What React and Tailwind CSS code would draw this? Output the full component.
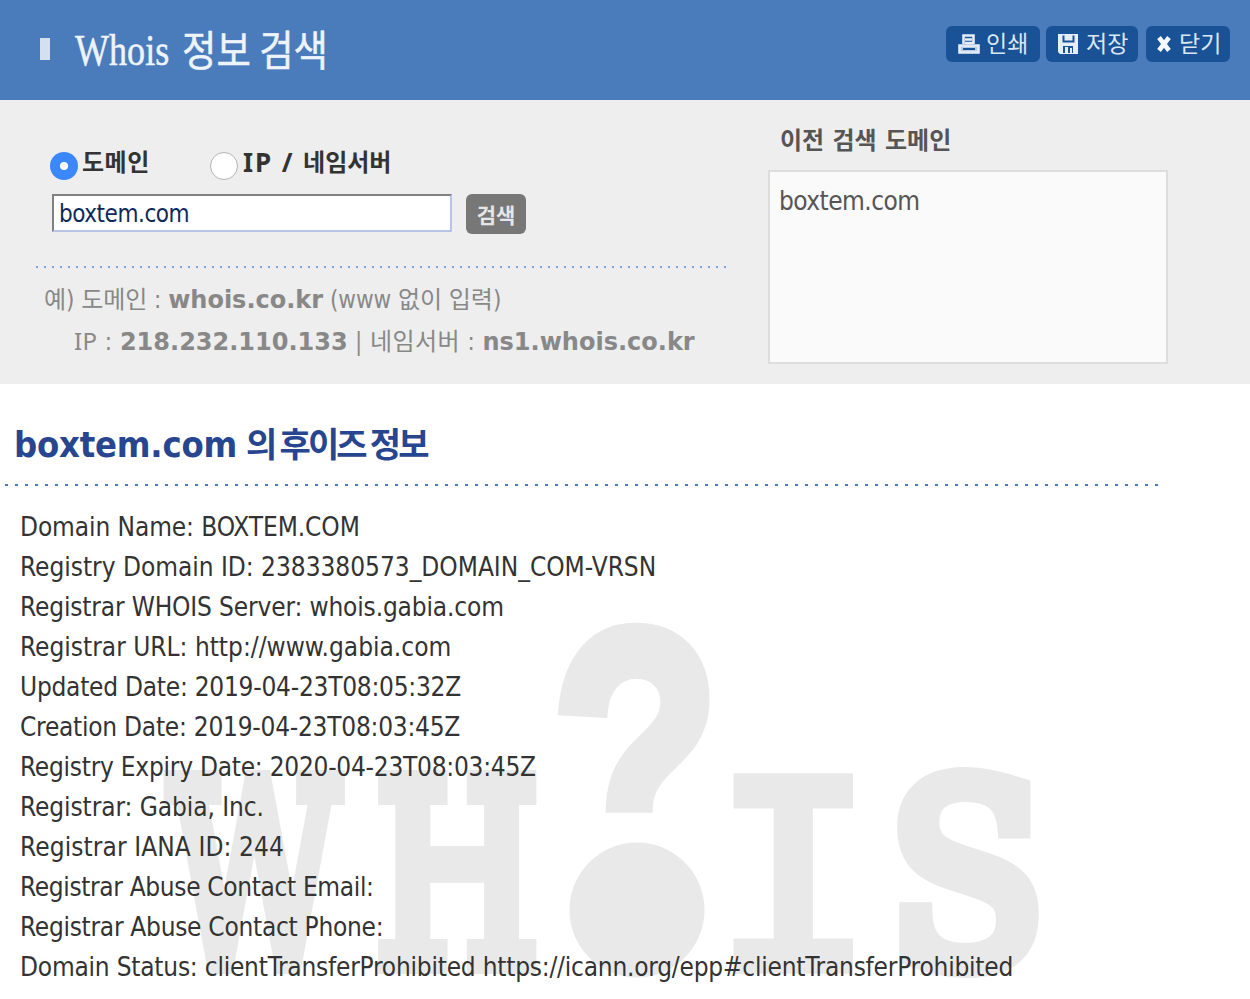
const BODY = "font-['DejaVu_Sans_Condensed','DejaVu_Sans','Noto_Sans_CJK_KR',sans-serif]"
const BOLD = "font-['DejaVu_Sans','Noto_Sans_CJK_KR',sans-serif] font-bold"

const RECORD = [
  { text: 'Domain Name: BOXTEM.COM', tracking: 'tracking-[-0.1px]' },
  { text: 'Registry Domain ID: 2383380573_DOMAIN_COM-VRSN', tracking: 'tracking-[-0.02px]' },
  { text: 'Registrar WHOIS Server: whois.gabia.com', tracking: 'tracking-[-0.15px]' },
  { text: 'Registrar URL: http://www.gabia.com', tracking: 'tracking-[0px]' },
  { text: 'Updated Date: 2019-04-23T08:05:32Z', tracking: 'tracking-[-0.25px]' },
  { text: 'Creation Date: 2019-04-23T08:03:45Z', tracking: 'tracking-[-0.25px]' },
  { text: 'Registry Expiry Date: 2020-04-23T08:03:45Z', tracking: 'tracking-[-0.25px]' },
  { text: 'Registrar: Gabia, Inc.', tracking: 'tracking-[-0.08px]' },
  { text: 'Registrar IANA ID: 244', tracking: 'tracking-[0.1px]' },
  { text: 'Registrar Abuse Contact Email:', tracking: 'tracking-[-0.35px]' },
  { text: 'Registrar Abuse Contact Phone:', tracking: 'tracking-[-0.28px]' },
  {
    text: 'Domain Status: clientTransferProhibited https://icann.org/epp#clientTransferProhibited',
    tracking: 'tracking-[-0.22px]',
  },
]

function PrintIcon() {
  return (
    <svg width="22" height="20" viewBox="0 0 22 20" fill="none" stroke="#e4edf8" strokeWidth="2.6">
      <path d="M5.5 10V1.5h10V10M7 5.5h7M7 9h8" />
      <path d="M1.5 11.5h19v7h-19z" fill="#b9cde6" />
      <path d="M5 15h12" stroke="#1a5297" strokeWidth="2" />
    </svg>
  )
}

function SaveIcon() {
  return (
    <svg width="20" height="20" viewBox="0 0 20 20">
      <path d="M0 0h20v20H2l-2-2z" fill="#e4edf8" />
      <path d="M4.5 1.5h2v5h8v-5h2v7h-12zM5 12h10v7H5z" fill="#1a5297" />
      <path d="M7 13h3v6H7zM12 14h2v5h-2z" fill="#e4edf8" />
    </svg>
  )
}

function CloseIcon() {
  return (
    <svg width="14" height="16" viewBox="0 0 14 16" fill="none" stroke="#f4f8fd" strokeWidth="4.6">
      <path d="M2 1.5l10 13M12 1.5l-10 13" />
    </svg>
  )
}

function HeaderButton({ className, icon, label }) {
  return (
    <button
      className={`flex h-9 items-center rounded-md bg-[#1a5297] font-['Noto_Sans_CJK_KR',sans-serif] text-[23px] text-[#dbe6f4] ${className}`}
    >
      {icon}
      <span className="pb-[3px] leading-[33px]">{label}</span>
    </button>
  )
}

function Header() {
  return (
    <header className="flex h-[100px] justify-between bg-[#4a7bbb] pr-5 pl-10">
      <div className="flex">
        <span className="mt-[38px] h-[22px] w-[10px] bg-[#d3e0f0]" />
        <h1 className="ml-[25px] flex h-[100px] w-64 whitespace-nowrap text-[#eef4fb] [-webkit-text-stroke:0.5px_#eef4fb]">
          <span className="w-[107px] origin-left scale-x-[0.82] font-['Liberation_Serif',serif] text-[44px] leading-[102px]">
            Whois
          </span>
          <span className="origin-left scale-x-[0.89] font-['Noto_Sans_CJK_KR',sans-serif] text-[42px] leading-[96px]">
            정보 검색
          </span>
        </h1>
      </div>
      <div className="mt-[26px] flex">
        <HeaderButton className="w-[94px] gap-[6px] pl-3" icon={<PrintIcon />} label="인쇄" />
        <HeaderButton className="ml-1.5 w-[92px] gap-2 pl-3" icon={<SaveIcon />} label="저장" />
        <HeaderButton className="ml-2 w-[84px] gap-2 pl-[11px]" icon={<CloseIcon />} label="닫기" />
      </div>
    </header>
  )
}

function SearchForm() {
  return (
    <div className="w-[768px] pl-9">
      <div className={`mt-[44px] flex h-10 text-2xl leading-[38px] text-[#333] ${BOLD}`}>
        <label className="flex w-40 pl-[14px]">
          <span className="mt-2 flex size-7 items-center justify-center rounded-full bg-[#3b88fd]">
            <span className="size-2 rounded-full bg-white" />
          </span>
          <span className="ml-1 tracking-[0.5px]">도메인</span>
        </label>
        <label className="flex pl-[14px]">
          <span className="mt-2 size-7 rounded-full border border-[#b4b4b4] bg-white" />
          <span className="ml-[5px] font-['Noto_Sans',sans-serif] text-[26px] leading-[37px] tracking-[1.9px] whitespace-pre">
            IP /{' '}
          </span>
          <span>네임서버</span>
        </label>
      </div>
      <div className="mt-[10px] flex h-10 pl-4">
        <div
          className={`h-[38px] w-[400px] border-2 border-t-[#808080] border-r-[#b8c4e6] border-b-[#b8c4e6] border-l-[#808080] bg-white pl-[5px] text-2xl leading-[36px] tracking-[-0.45px] text-[#0b2a5b] ${BODY}`}
        >
          boxtem.com
        </div>
        <button className="ml-[14px] h-10 w-[60px] rounded-md bg-[#777] font-['Noto_Sans_CJK_KR',sans-serif] text-[21px] leading-[38px] font-bold text-[#e6e6e6]">
          검색
        </button>
      </div>
      <div className="mt-8 h-[2px] w-[692px] bg-[repeating-linear-gradient(90deg,#74a5d8_0_2px,transparent_2px_8px)]" />
      <div className={`mt-[11px] text-2xl leading-[42px] whitespace-nowrap text-[#888] ${BODY}`}>
        <p className="pl-2 tracking-[-0.05px]">
          예) 도메인 : <b className={`tracking-normal ${BOLD}`}>whois.co.kr</b> (www 없이 입력)
        </p>
        <p className="pl-[38px] tracking-[0.45px]">
          <span className="font-['Noto_Sans',sans-serif] leading-none">IP</span> :{' '}
          <b className={`tracking-normal ${BOLD}`}>218.232.110.133</b> | 네임서버 :{' '}
          <b className={`tracking-normal ${BOLD}`}>ns1.whois.co.kr</b>
        </p>
      </div>
    </div>
  )
}

function History() {
  return (
    <div>
      <h2 className={`mt-[23px] pl-3 text-2xl leading-9 text-[#555] ${BOLD}`}>이전 검색 도메인</h2>
      <div
        className={`mt-[11px] h-[194px] w-[400px] border-2 border-[#ddd] bg-[#fafafa] pt-[9px] pl-[9px] text-[26px] leading-10 tracking-[-0.55px] text-[#555] ${BODY}`}
      >
        boxtem.com
      </div>
    </div>
  )
}

function Watermark() {
  return (
    <svg
      className="absolute top-0 left-0"
      width="1044"
      height="615"
      viewBox="0 384 1044 615"
      fill="#e9e9e9"
      stroke="#e9e9e9"
    >
      <clipPath id="hook">
        <path d="M540 600h200v214H540z" />
      </clipPath>
      <g fontFamily="DejaVu Serif" fontSize="250" strokeWidth="22">
        <text transform="translate(170 963) scale(0.655 1)">W</text>
        <text transform="translate(376 963) scale(0.745 1)">H</text>
        <text transform="translate(888 963) scale(0.92 1)">S</text>
      </g>
      <g fontFamily="Liberation Mono" fontWeight="700" fontSize="200">
        <text transform="translate(714 973) scale(1.32 1.51)">I</text>
        <g clipPath="url(#hook)">
          <text transform="translate(554 879) scale(1.38 1.86)" strokeWidth="8">
            ?
          </text>
        </g>
      </g>
      <circle cx="637" cy="910" r="67" />
    </svg>
  )
}

export default function App() {
  return (
    <div className="h-[999px] w-[1250px] overflow-hidden bg-white">
      <Header />
      <section className="flex h-[284px] bg-[#eee]">
        <SearchForm />
        <History />
      </section>
      <main className="relative h-[615px] overflow-hidden">
        <Watermark />
        <div className="relative pt-[36px]">
          <h2 className="flex h-[50px] pl-[14px] leading-[50px] font-bold whitespace-nowrap text-[#27468f]">
            <span className={`w-[232px] text-4xl leading-[50px] tracking-[-0.2px] ${BODY}`}>boxtem.com</span>
            <span className="font-['Noto_Sans_CJK_KR',sans-serif] text-[34px] leading-[46px] tracking-[-2.8px]">
              의 후이즈 정보
            </span>
          </h2>
          <div className="mt-[14px] ml-[5px] h-[2px] w-[1155px] bg-[repeating-linear-gradient(90deg,#4a7bbb_0_3px,transparent_3px_10px)]" />
          <ul className={`mt-[21px] pl-5 text-[26px] leading-10 whitespace-nowrap text-[#333] ${BODY}`}>
            {RECORD.map((r) => (
              <li key={r.text} className={r.tracking}>
                {r.text}
              </li>
            ))}
          </ul>
        </div>
      </main>
    </div>
  )
}
